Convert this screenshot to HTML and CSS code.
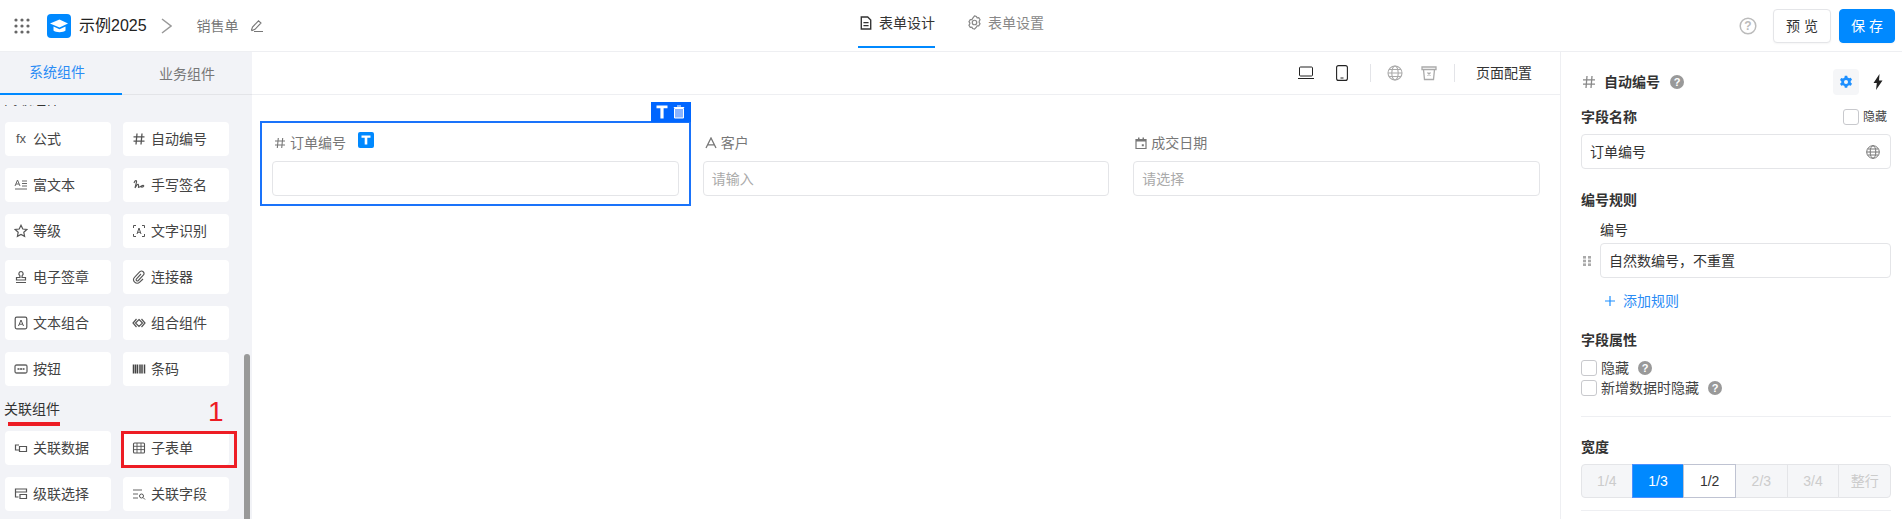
FILE: index.html
```html
<!DOCTYPE html>
<html lang="zh">
<head>
<meta charset="utf-8">
<title>表单设计</title>
<link rel="stylesheet" href="styles.css">
</head>
<body>
<div class="app">
  <header class="topbar">
    <div class="top-left">
      <svg class="ico-apps" viewBox="0 0 16 16" width="16" height="16"><g fill="#666"><circle cx="2" cy="2" r="1.600"/><circle cx="8" cy="2" r="1.600"/><circle cx="14" cy="2" r="1.600"/><circle cx="2" cy="8" r="1.600"/><circle cx="8" cy="8" r="1.600"/><circle cx="14" cy="8" r="1.600"/><circle cx="2" cy="14" r="1.600"/><circle cx="8" cy="14" r="1.600"/><circle cx="14" cy="14" r="1.600"/></g></svg>
      <span class="logo"><svg viewBox="0 0 24 24" width="24" height="24"><rect width="24" height="24" rx="4" fill="#0089ff"/><path d="M3 9.500 12.500 5.500 21 9.500 12.500 13.500Z" fill="#fff"/><path d="M6.500 12.500v4c2 2.200 10 2.200 12 0v-4l-6 2.800Z" fill="#fff"/></svg></span>
      <span class="app-name">示例2025</span>
      <svg class="chev" viewBox="0 0 11 16" width="11" height="16"><path d="M1 1l9 7-9 7" fill="none" stroke="#999" stroke-width="1.500"/></svg>
      <span class="form-name">销售单</span>
      <svg class="pen" viewBox="0 0 14 14" width="14" height="14"><path d="M1.500 11 2.500 8 8.500 1.800 11 4 5 10.300 2 11.500ZM4 12.500h9" fill="none" stroke="#777" stroke-width="1.100"/></svg>
    </div>
    <nav class="top-tabs">
      <a class="top-tab active"><svg viewBox="0 0 14 16" width="12" height="14"><path d="M1.500 1h7.500l3.500 3.500v10.500h-11Z" fill="none" stroke="#333" stroke-width="1.600"/><path d="M4 7.500h6M4 11h6" stroke="#333" stroke-width="1.400"/></svg>表单设计</a>
      <a class="top-tab"><svg viewBox="0 0 16 16" width="15" height="15"><path d="M8 1l2 .6.800 1.400 1.700-.1 1.400 2.200-.9 1.400.0 1.500.9 1.400-1.400 2.200-1.700-.1-.8 1.400L8 15l-2-.6-.8-1.400-1.700.1-1.400-2.200.9-1.400V8.500l-.9-1.400 1.400-2.200 1.700.1.800-1.400Z" fill="none" stroke="#888" stroke-width="1.300"/><circle cx="8" cy="8" r="2.400" fill="none" stroke="#888" stroke-width="1.300"/></svg>表单设置</a>
    </nav>
    <div class="top-right">
      <svg viewBox="0 0 18 18" width="18" height="18"><circle cx="9" cy="9" r="7.800" fill="none" stroke="#bbb" stroke-width="1.500"/><text x="9" y="13" text-anchor="middle" class="q-mark">?</text></svg>
      <button class="btn">预 览</button>
      <button class="btn primary">保 存</button>
    </div>
  </header>
  <div class="main">
    <aside class="sidebar">
      <div class="side-tabs">
        <a class="side-tab active">系统组件</a>
        <a class="side-tab">业务组件</a>
      </div>
      <div class="side-list">
        <div class="group-title clipped">高级组件</div>
        <div class="cards">
          <div class="card"><span class="fx">fx</span>公式</div>
          <div class="card"><svg viewBox="0 0 14 14"><path d="M5 1.500 4 12.500M10 1.500 9 12.500M1.500 4.800h11M1.500 9.200h11" stroke="#555" stroke-width="1.300" fill="none"/></svg>自动编号</div>
          <div class="card"><svg viewBox="0 0 14 14"><path d="M1 8 3.500 2 6 8M2 6h3M8 3h5M8 5.500h5M8 8h5M1 11h12" stroke="#666" stroke-width="1" fill="none"/></svg>富文本</div>
          <div class="card"><svg viewBox="0 0 14 14"><path d="M2 5c1-3 3-3 2.500-1L3 10c2-3 3-5 3.500-3s-1 3 1 2 3-2 4-1.500-1 2.500-3 1" stroke="#555" stroke-width="1.100" fill="none"/></svg>手写签名</div>
          <div class="card"><svg viewBox="0 0 14 14"><path d="M7 1.300 8.800 5l4 .5-3 2.800.8 4L7 10.400l-3.600 1.900.8-4-3-2.800 4-.5Z" stroke="#555" stroke-width="1.200" fill="none"/></svg>等级</div>
          <div class="card"><svg viewBox="0 0 14 14"><path d="M1.500 4V1.500H4M10 1.500h2.500V4M1.500 10v2.500H4M10 12.500h2.500V10M5 10 7 4l2 6M5.700 8.300h2.600" stroke="#555" stroke-width="1" fill="none"/></svg>文字识别</div>
          <div class="card"><svg viewBox="0 0 14 14"><path d="M7 1.500a2.200 2.200 0 0 1 1.200 4L8 7.500h3.500v2.500h-9V7.500H6l-.2-2a2.200 2.200 0 0 1 1.200-4ZM2 12.500h10" stroke="#555" stroke-width="1.200" fill="none"/></svg>电子签章</div>
          <div class="card"><svg viewBox="0 0 14 14"><path d="M9 4 4.500 8.800a1.200 1.200 0 0 0 1.800 1.700l5.200-5.500a2.500 2.500 0 0 0-3.600-3.400L2.700 7.200a3.500 3.500 0 0 0 5 5L11 9" stroke="#555" stroke-width="1.100" fill="none"/></svg>连接器</div>
          <div class="card"><svg viewBox="0 0 14 14"><rect x="1.200" y="1.200" width="11.600" height="11.600" rx="1.500" stroke="#555" stroke-width="1.200" fill="none"/><path d="M4.500 10 7 4l2.500 6M5.300 8.200h3.400" stroke="#555" fill="none"/></svg>文本组合</div>
          <div class="card"><svg viewBox="0 0 14 14"><path d="M4.500 3 1 7l3.500 4M9.500 3 13 7l-3.500 4M7 3.500 10.500 7 7 10.500 3.500 7Z" stroke="#555" stroke-width="1.200" fill="none"/></svg>组合组件</div>
          <div class="card"><svg viewBox="0 0 14 14"><rect x="1" y="3" width="12" height="8" rx="1.500" stroke="#666" stroke-width="1.300" fill="none"/><path d="M3.500 7h7" stroke="#777" stroke-width="2" stroke-dasharray="2 .6"/></svg>按钮</div>
          <div class="card"><svg viewBox="0 0 14 14"><path d="M1.500 2.500v9M3.500 2.500v9M5.500 2.500v9M8 2.500v9M10 2.500v9M12.500 2.500v9" stroke="#444" stroke-width="1.500"/></svg>条码</div>
        </div>
        <div class="group-title">关联组件</div>
        <div class="cards">
          <div class="card"><svg viewBox="0 0 14 14"><path d="M5 4H1.500v5H5M5.500 5.500h7v5h-7ZM5.500 5.500V10" stroke="#555" stroke-width="1.200" fill="none"/></svg>关联数据</div>
          <div class="card"><svg viewBox="0 0 14 14"><rect x="1.500" y="2" width="11" height="10" rx="1" stroke="#555" stroke-width="1.100" fill="none"/><path d="M1.500 5.300h11M1.500 8.600h11M5 2v10M9 2v10" stroke="#555" stroke-width=".9"/></svg>子表单</div>
          <div class="card"><svg viewBox="0 0 14 14"><path d="M1.500 2h11v3h-11ZM1.500 5v5h3M6 7.500h6.500v4H6Z" stroke="#555" stroke-width="1.200" fill="none"/></svg>级联选择</div>
          <div class="card"><svg viewBox="0 0 14 14"><path d="M1 3h9M1 7h5M1 11h5" stroke="#666" stroke-width="1.100"/><circle cx="9.500" cy="9" r="2" stroke="#555" fill="none"/><path d="M11 10.500l2 2" stroke="#555"/></svg>关联字段</div>
        </div>
        <span class="mark-num">1</span>
        <span class="mark-line"></span>
        <span class="mark-box"></span>
      </div>
      <div class="scroll-thumb"></div>
    </aside>
    <section class="canvas">
      <div class="toolbar">
        <svg viewBox="0 0 16 14" width="16" height="14"><rect x="1.500" y="1" width="13" height="9" rx="1" fill="none" stroke="#222"/><path d="M0 12.500h16" stroke="#222"/></svg>
        <svg class="gap-phone" viewBox="0 0 12 16" width="12" height="16"><rect x=".6" y=".6" width="10.800" height="14.800" rx="2" fill="none" stroke="#222" stroke-width="1.100"/><path d="M4.500 13h3" stroke="#222"/></svg>
        <span class="vline"></span>
        <svg viewBox="0 0 16 16" width="16" height="16"><g fill="none" stroke="#aaa" stroke-width="1.100"><circle cx="8" cy="8" r="7"/><ellipse cx="8" cy="8" rx="3.200" ry="7"/><path d="M1 8h14M2 4.500h12M2 11.500h12"/></g></svg>
        <svg class="gap-trash" viewBox="0 0 16 16" width="16" height="16"><g fill="none" stroke="#aaa" stroke-width="1.300"><path d="M1 2h14v2.500H1ZM2.500 4.500 3.500 14.500h9l1-10"/><path d="M6.500 7.500l3 3M9.500 7.500l-3 3"/></g></svg>
        <span class="vline"></span>
        <span class="page-config">页面配置</span>
      </div>
      <div class="form-grid">
        <div class="field selected">
          <div class="tag"><svg viewBox="0 0 12 14" width="12" height="14"><path d="M.5 .5h11v2.800H7.600v10.200H4.400V3.300H.5Z" fill="#fff"/></svg><svg viewBox="0 0 12 14" width="12" height="14"><path d="M4 1h4M.8 2.500h10.400" stroke="#fff"/><path d="M1.500 3.500h9v9.500h-9Z" fill="#8ab4ff" stroke="#fff"/></svg></div>
          <label class="f-label"><svg viewBox="0 0 12 12" width="12" height="12"><path d="M4.300 1 3.300 11M8.700 1 7.700 11M1 4h10M1 8h10" stroke="#777" stroke-width="1.100" fill="none"/></svg>订单编号<span class="t-badge"><svg viewBox="0 0 16 16" width="16" height="16"><rect width="16" height="16" rx="2" fill="#0089ff"/><path d="M3.500 3.500h9v2.300H9.300v6.700H6.700V5.800H3.500Z" fill="#fff"/></svg></span></label>
          <div class="f-input"></div>
        </div>
        <div class="field">
          <label class="f-label"><svg viewBox="0 0 12 12" width="12" height="12"><path d="M1 11 6 1l5 10M2.800 7.800h6.400" stroke="#777" stroke-width="1.300" fill="none"/></svg>客户</label>
          <div class="f-input placeholder">请输入</div>
        </div>
        <div class="field">
          <label class="f-label"><svg viewBox="0 0 12 12" width="12" height="12"><path d="M1 2.500h10v9H1Z" fill="none" stroke="#777" stroke-width="1.200"/><path d="M1 2h10v2.500H1ZM3 .5h1.500V2H3ZM7.500 .5H9V2H7.500ZM6.800 7.300h2v2h-2Z" fill="#777"/></svg>成交日期</label>
          <div class="f-input placeholder">请选择</div>
        </div>
      </div>
    </section>
    <aside class="props">
      <div class="prop-head">
        <svg viewBox="0 0 14 14" width="14" height="14"><path d="M5 1 4 13M10 1 9 13M1 4.800h12M1 9.200h12" stroke="#888" stroke-width="1.300" fill="none"/></svg>
        <strong>自动编号</strong>
        <span class="help-dot big">?</span>
        <span class="spacer"></span>
        <span class="gear-box"><svg viewBox="0 0 14 14" width="14" height="14"><path d="M5.800.8h2.400l.4 1.700 1.500.8 1.700-.5 1.200 2-1.300 1.200v1.600l1.300 1.200-1.200 2-1.700-.5-1.500.8-.4 1.700H5.800l-.4-1.700-1.500-.8-1.700.5-1.200-2L2.300 7.800V6.200L1 5l1.200-2 1.700.5 1.500-.8Z" fill="#1e90ff"/><circle cx="7" cy="7" r="2" fill="#f5f6f8"/></svg></span>
        <svg class="bolt" viewBox="0 0 10 16" width="10" height="16"><path d="M6.500 0 .5 9h3.300L3 16 9.500 6.500H6Z" fill="#222"/></svg>
      </div>
      <div class="label-row">
        <span class="p-title">字段名称</span>
        <label class="check small"><span class="box"></span>隐藏</label>
      </div>
      <div class="p-input name-input">订单编号<svg viewBox="0 0 14 14" width="14" height="14"><g fill="none" stroke="#777"><circle cx="7" cy="7" r="6.300"/><ellipse cx="7" cy="7" rx="2.800" ry="6.300"/><path d="M.7 7h12.600M1.700 4h10.600M1.700 10h10.600"/></g></svg></div>
      <div class="p-title sec-rule">编号规则</div>
      <div class="rule-label">编号</div>
      <div class="rule-row">
        <svg viewBox="0 0 8 10" width="8" height="10"><g fill="#aaa"><rect width="3" height="2.600"/><rect x="5" width="3" height="2.600"/><rect y="3.700" width="3" height="2.600"/><rect x="5" y="3.700" width="3" height="2.600"/><rect y="7.400" width="3" height="2.600"/><rect x="5" y="7.400" width="3" height="2.600"/></g></svg>
        <div class="p-input rule-input">自然数编号，不重置</div>
      </div>
      <a class="add-rule"><svg viewBox="0 0 10 10" width="10" height="10"><path d="M5 0v10M0 5h10" stroke="#1e90ff" stroke-width="1.200"/></svg>添加规则</a>
      <div class="p-title sec-attr">字段属性</div>
      <label class="check"><span class="box"></span>隐藏<span class="help-dot">?</span></label>
      <label class="check"><span class="box"></span>新增数据时隐藏<span class="help-dot">?</span></label>
      <hr class="rule-line first">
      <div class="p-title sec-width">宽度</div>
      <div class="segments">
        <span class="seg">1/4</span>
        <span class="seg on">1/3</span>
        <span class="seg cur">1/2</span>
        <span class="seg">2/3</span>
        <span class="seg">3/4</span>
        <span class="seg">整行</span>
      </div>
      <hr class="rule-line last">
    </aside>
  </div>
</div>
</body>
</html>
```
FILE: styles.css
```css
* { box-sizing: border-box; }
html, body { margin: 0; height: 519px; overflow: hidden; background: #fff; }
body { font: 14px/20px "Liberation Sans", "Noto Sans CJK SC", sans-serif; color: #333; }
svg { display: block; flex: none; }
.app { display: flex; flex-direction: column; height: 519px; }

/* top bar */
.topbar { height: 52px; flex: none; display: grid; grid-template-columns: 1fr auto 1fr; align-items: center; border-bottom: 1px solid #eeeff2; padding: 0 7px 0 14px; }
.top-left { display: flex; align-items: center; height: 51px; }
.logo { margin-left: 17px; }
.app-name { font-size: 16px; color: #222; margin-left: 8px; }
.chev { margin-left: 14px; }
.form-name { color: #777; margin-left: 25px; }
.pen { margin-left: 11px; }
.top-tabs { display: flex; height: 51px; gap: 30px; margin-right: 7px; }
.top-tab { display: flex; align-items: center; gap: 7px; color: #888; height: 48px; padding: 1px 0 2px 2px; border-bottom: 2px solid transparent; }
.top-tab + .top-tab { gap: 6px; }
.top-tab.active { color: #333; border-bottom-color: #0089ff; }
.top-right { display: flex; align-items: center; justify-content: flex-end; gap: 8px; }
.top-right svg { margin-right: 8px; }
.q-mark { font-size: 12px; fill: #bbb; font-weight: bold; }
.btn { font: inherit; height: 34px; width: 58px; border: 1px solid #e4e5e8; border-radius: 4px; background: #fff; color: #333; padding: 0; box-shadow: 0 1px 2px rgba(0,0,0,.04); }
.btn.primary { width: 56px; background: #0089ff; border-color: #0089ff; color: #fff; }

.main { flex: 1; display: flex; min-height: 0; }

/* sidebar */
.sidebar { width: 252px; flex: none; background: #f2f3f7; display: flex; flex-direction: column; position: relative; overflow: hidden; }
.side-tabs { display: flex; height: 43px; flex: none; border-bottom: 1px solid #e3e4e8; margin-bottom: 10px; }
.side-tab { display: flex; align-items: center; justify-content: center; color: #777; height: 43px; width: 130px; }
.side-tab.active { width: 122px; padding: 0 8px 2px 0; color: #2b8cf5; border-bottom: 2px solid #0089ff; }
.side-list { position: relative; flex: 1; overflow: hidden; padding: 0 0 0 5px; }
.group-title { font-size: 14px; line-height: 20px; height: 20px; color: #333; margin-left: -1px; }
.group-title.clipped { margin-top: -16px; margin-bottom: 13px; }
.cards { display: grid; grid-template-columns: 106px 106px; column-gap: 12px; row-gap: 12px; }
.cards + .group-title { margin-top: 13px; margin-bottom: 12px; }
.card { height: 34px; background: #fff; border-radius: 4px; display: flex; align-items: center; gap: 5px; padding-left: 9px; color: #444; }
.card svg { width: 14px; height: 14px; }
.fx { width: 14px; font-size: 13px; color: #555; text-align: center; }
.mark-num { position: absolute; left: 208px; top: 287px; font-size: 28px; line-height: 40px; color: #ed1c24; }
.mark-line { position: absolute; left: 8px; top: 317px; width: 52px; height: 4px; background: #ed1c24; }
.mark-box { position: absolute; left: 121px; top: 326px; width: 116px; height: 37px; border: 3px solid #ed1c24; }
.scroll-thumb { position: absolute; left: 244px; top: 302px; width: 6px; height: 170px; background: #999; border-radius: 3px 3px 0 0; }

/* canvas */
.canvas { flex: 1; min-width: 0; display: flex; flex-direction: column; }
.toolbar { height: 43px; flex: none; border-bottom: 1px solid #eeeff2; display: flex; align-items: center; justify-content: flex-end; padding: 0 28px 0 0; }
.gap-phone { margin-left: 22px; }
.gap-trash { margin-left: 18px; }
.vline { width: 1px; height: 18px; background: #e3e4e8; margin: 0 16px 0 22px; }
.gap-trash + .vline { margin-left: 17px; margin-right: 21px; }
.page-config { color: #333; }
.form-grid { display: grid; grid-template-columns: repeat(3, 1fr); padding: 26px 8px 0; align-items: start; }
.field { height: 85px; padding: 12px 12px 10px; position: relative; }
.field.selected { border: 2px solid #1a73fa; padding: 10px 10px 8px; }
.tag { position: absolute; right: -2px; top: -21px; width: 40px; height: 20px; background: #0066ff; display: flex; align-items: center; justify-content: center; gap: 5px; }
.f-label { display: flex; align-items: center; gap: 4px; height: 20px; margin-bottom: 8px; color: #777; margin-left: 2px; }
.t-badge { margin-left: 8px; margin-top: -6px; }
.f-input { height: 35px; border: 1px solid #e4e5e8; border-radius: 4px; padding: 0 8px; line-height: 34px; }
.placeholder { color: #aaa; }

/* properties */
.props { width: 342px; flex: none; border-left: 1px solid #eeeff2; padding: 0 11px 0 20px; }
.prop-head { display: flex; align-items: center; height: 26px; margin-top: 17px; }
.prop-head strong { margin-left: 8px; font-size: 14px; color: #333; }
.prop-head > svg:first-child { margin-left: 1px; }
.spacer { flex: 1; }
.gear-box { width: 26px; height: 26px; background: #f5f6f8; border-radius: 4px; display: flex; align-items: center; justify-content: center; }
.bolt { margin: 0 8px 0 14px; }
.help-dot { display: inline-block; width: 14px; height: 14px; border-radius: 50%; background: #999; color: #fff; font-size: 11px; line-height: 14px; text-align: center; font-weight: bold; margin-left: 5px; }
.help-dot.big { margin-left: 10px; }
.label-row { display: flex; justify-content: space-between; align-items: center; height: 20px; margin-top: 12px; padding-right: 4px; }
.p-title { font-weight: bold; color: #333; line-height: 20px; }
.check { display: flex; align-items: center; gap: 4px; height: 20px; color: #444; }
.box { width: 16px; height: 16px; border: 1px solid #c8c9cd; border-radius: 3px; background: #fff; }
.check.small { font-size: 12px; }
.p-input { height: 35px; border: 1px solid #e4e5e8; border-radius: 4px; display: flex; align-items: center; padding: 0 8px; }
.name-input { margin-top: 7px; justify-content: space-between; padding-right: 10px; }
.sec-rule { margin-top: 21px; }
.rule-label { margin: 10px 0 3px 19px; }
.rule-row { display: flex; align-items: center; gap: 9px; padding-left: 2px; }
.rule-input { flex: 1; }
.add-rule { display: flex; align-items: center; gap: 8px; color: #2b8cf5; margin: 13px 0 0 24px; }
.sec-attr { margin-top: 19px; }
.sec-attr + .check { margin-top: 8px; }
.rule-line { border: 0; height: 1px; background: #eeeff2; margin: 0; }
.rule-line.first { margin-top: 18px; }
.sec-width { margin-top: 20px; }
.segments { display: grid; grid-template-columns: repeat(6, 1fr); height: 34px; margin-top: 7px; border-radius: 4px; }
.seg { display: flex; align-items: center; justify-content: center; background: #f5f6f8; border: 1px solid #e4e5e8; margin-left: -1px; color: #ccc; }
.seg:first-child { margin-left: 0; border-radius: 4px 0 0 4px; }
.seg:last-child { border-radius: 0 4px 4px 0; }
.seg.on { background: #0089ff; border-color: #4a90ff; color: #fff; position: relative; }
.seg.cur { background: #fff; border-color: #bfc3d2; color: #333; position: relative; }
.rule-line.last { margin-top: 12px; }
```
